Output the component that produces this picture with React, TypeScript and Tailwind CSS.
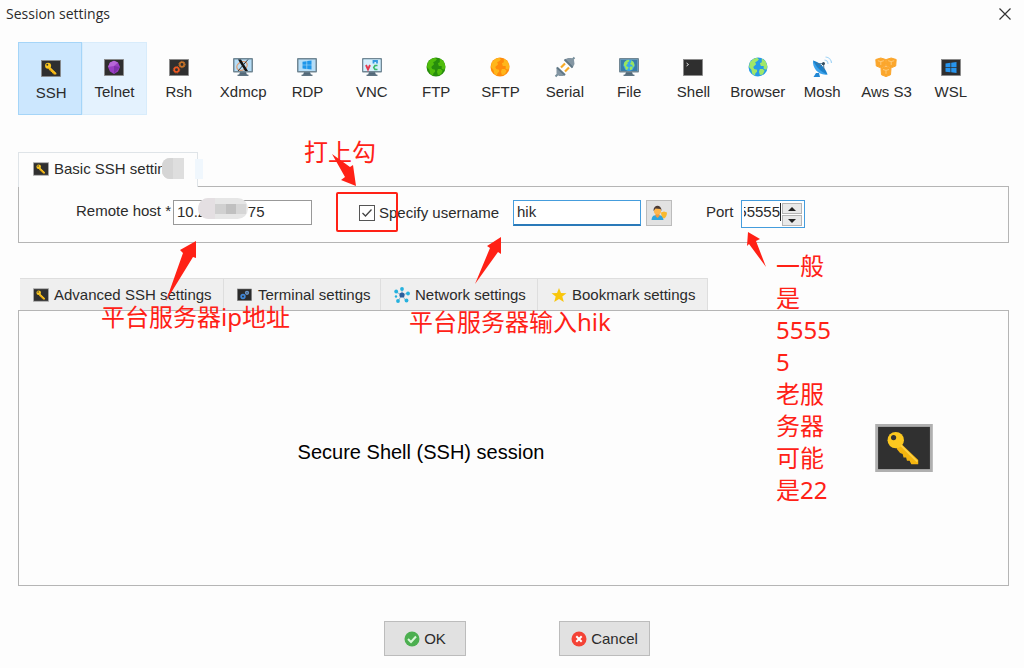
import React, { useState } from 'react';

function Key() {
  return (
    <g transform="translate(2.500 1.500) scale(.9)">
      <path d="M26 20 L47 40 L47 45 L39 45 L37 41 L34 41 L33 37 L30 37 L29 33 L26 32 L22 27 Z" fill="#f5b50f" />
      <circle cx="21" cy="17" r="9.500" fill="#fcc81f" />
      <path d="M27 23 L46 42" stroke="#fdd043" strokeWidth="2" />
      <circle cx="18.500" cy="14" r="3" fill="#333" />
    </g>
  );
}

function KeyTile({ className }: { className: string }) {
  return (
    <svg viewBox="0 0 60 50" className={className} aria-hidden="true">
      <rect x="1.500" y="1.500" width="57" height="47" fill="#303030" stroke="#b0b0b0" strokeWidth="3" />
      <Key />
    </svg>
  );
}

function Svg({ children }: { children: React.ReactNode }) {
  return <svg viewBox="0 0 22 22" className="h-[22px] w-[22px]" aria-hidden="true">{children}</svg>;
}

function Tile({ children }: { children: React.ReactNode }) {
  return (
    <Svg>
      <rect x="1.500" y="3.500" width="19" height="16" fill="#2f2f2f" stroke="#8b8b8b" strokeWidth="0.800" />
      {children}
    </Svg>
  );
}

function Monitor({ children }: { children: React.ReactNode }) {
  return (
    <Svg>
      <path d="M8 16h6l1 3h-8z" fill="#536878" />
      <rect x="5.500" y="18.500" width="11" height="1.500" rx="0.500" fill="#5f7482" />
      <rect x="1" y="2" width="20" height="14.500" rx="1" fill="#718794" />
      <rect x="2.500" y="3.500" width="17" height="11.500" fill="#b5ddf7" />
      {children}
    </Svg>
  );
}

function Globe({ sea, land, cx = 11, cy = 11, r = 9.5 }: { sea: string; land: string; cx?: number; cy?: number; r?: number }) {
  return (
    <g transform={`translate(${cx} ${cy}) scale(${r / 10})`}>
      <circle r="10" fill={sea} />
      <path d="M-8.500 -5 L-5 -8.500 L-1 -9.800 L1 -8 L-1 -6 L-3 -5 L-2 -3 L-5 0 L-4 2 L-1 3 L-1 5 L-3 7 L-3 9.300 L-6 7 L-7 3 L-9.500 0 Z" fill={land} />
      <path d="M4 -9 L8 -6 L9.800 -1 L9 3 L6 2 L6 -1 L3 -1 L2 -4 L4 -5 Z M2 2 L5 2 L7 4 L5 8 L2 8.500 L1 5 Z" fill={land} />
    </g>
  );
}

function WindowsMark({ x, y, s, fill }: { x: number; y: number; s: number; fill: string }) {
  return (
    <path
      transform={`translate(${x} ${y}) scale(${s})`}
      d="M0 1.300 L4.500 0.700 V4.700 H0Z M5.200 0.600 L10 0 V4.700 H5.200Z M0 5.400 H4.500 V9.400 L0 8.800Z M5.200 5.400 H10 V10 L5.200 9.400Z"
      fill={fill}
    />
  );
}

function Bucket({ x, y }: { x: number; y: number }) {
  return (
    <g transform={`translate(${x} ${y})`}>
      <path d="M0 1.500 L5 0 L10 1.500 L9.500 8 L5 9.800 L0.500 8Z" fill="#fba62c" stroke="#fba62c" strokeLinejoin="round" />
      <path d="M2 2.700 L5 3.600 L8 2.700 M5 3.600 V7" fill="none" stroke="#ffd38a" strokeWidth="0.800" />
    </g>
  );
}

const sessions: { name: string; icon: React.ReactNode }[] = [
  { name: 'SSH', icon: <Tile><g transform="translate(.600 2.800) scale(.35)"><Key /></g></Tile> },
  {
    name: 'Telnet',
    icon: (
      <Tile>
        <path d="M11 4.800 L15 6.500 L17 11 L15 15.500 L11 18 L7 15.500 L5 11 L7 6.500Z" fill="#9a3fc4" />
        <path d="M11 4.800 L15 6.500 L11 10 L5 11 L7 6.500Z" fill="#b766d8" />
        <path d="M11 10 L17 11 L11 18Z" fill="#8031ac" />
      </Tile>
    ),
  },
  {
    name: 'Rsh',
    icon: (
      <Tile>
        <circle cx="8.500" cy="13.800" r="3.200" fill="none" stroke="#f05a22" strokeWidth="1" strokeDasharray="1 .700" />
        <circle cx="8.500" cy="13.800" r="2.200" fill="none" stroke="#f05a22" strokeWidth="1.500" />
        <circle cx="14" cy="8.500" r="3.200" fill="none" stroke="#c87328" strokeWidth="1" strokeDasharray="1 .700" />
        <circle cx="14" cy="8.500" r="2.200" fill="none" stroke="#c87328" strokeWidth="1.500" />
      </Tile>
    ),
  },
  {
    name: 'Xdmcp',
    icon: (
      <Monitor>
        <ellipse cx="10" cy="10" rx="5.500" ry="4" transform="rotate(-30 10 10)" fill="none" stroke="#e19a6d" strokeWidth="1.300" />
        <path d="M6 3.500h3l7 11.500h-3z" fill="#111" />
        <path d="M16 3.500 L6 15" stroke="#222" strokeWidth="0.900" />
      </Monitor>
    ),
  },
  { name: 'RDP', icon: <Monitor><WindowsMark x={6.5} y={4.5} s={0.9} fill="#1e96ea" /></Monitor> },
  {
    name: 'VNC',
    icon: (
      <Monitor>
        <rect x="2.500" y="3.500" width="17" height="11.500" fill="#d5effc" />
        <path d="M5 9 L7 13.500 L9 9" fill="none" stroke="#e33b50" strokeWidth="1.900" />
        <path d="M12.500 7.500 V5 H16 V7.500" fill="none" stroke="#3398e0" strokeWidth="1.800" />
        <path d="M16.500 9.500 H14 L12.800 11.500 L14 13.500 H16.500" fill="none" stroke="#3bb969" strokeWidth="1.700" />
      </Monitor>
    ),
  },
  { name: 'FTP', icon: <Svg><Globe sea="#278d0c" land="#50bd0c" /></Svg> },
  { name: 'SFTP', icon: <Svg><Globe sea="#ff8b0b" land="#ffb61b" /></Svg> },
  {
    name: 'Serial',
    icon: (
      <Svg>
        <path d="M1.500 20.500 L4 18 M18 4 L20.500 1.500" stroke="#78909c" strokeWidth="2" />
        <path d="M2.500 11 L11.500 19 L9 20 L5 20 L2.500 17.500Z M10.500 3.500 L18.500 12 L20.500 8 L20 4 L17.500 2 L14 2Z" fill="#8496a3" />
        <path d="M7 11.500 L11 7.500 M11 15.500 L15 11.500" stroke="#f7aa26" strokeWidth="2.200" />
        <path d="M3 11.500 L11 19 M10.500 3.500 L18.500 11.500" stroke="#607785" strokeWidth="1.800" />
      </Svg>
    ),
  },
  { name: 'File', icon: <Monitor><rect x="2.500" y="3.500" width="17" height="11.500" fill="#397da8" /><Globe cx={11} cy={9.3} r={5.6} sea="#37a7ee" land="#9be65c" /></Monitor> },
  { name: 'Shell', icon: <Tile><path d="M4.500 7 L6.500 8.500 L4.500 10" fill="none" stroke="#ddd" strokeWidth="1" /></Tile> },
  { name: 'Browser', icon: <Svg><Globe sea="#259be9" land="#a0e769" /></Svg> },
  {
    name: 'Mosh',
    icon: (
      <Svg>
        <path d="M5 17 L2.500 21 H9 L8 17Z" fill="#2287d4" />
        <path d="M2 4.500 C1 12 8 20 16.500 18.500Z" fill="#3ba2eb" />
        <path d="M2 4.500 C8 6 14 11 16.500 18.500 C10 16 5 11 2 4.500Z" fill="#1b80ca" />
        <path d="M8 12 L12.500 7.500 M5 8 L12.500 7.500 L13 14" stroke="#4c7592" strokeWidth="1" fill="none" />
        <circle cx="12.500" cy="7.500" r="1.500" fill="#344b5b" />
        <path d="M13.500 4 A4 4 0 0 1 17 8 M14.500 1 A6.500 6.500 0 0 1 20.500 7" fill="none" stroke="#a5d5f6" strokeWidth="1.200" />
      </Svg>
    ),
  },
  { name: 'Aws S3', icon: <Svg><Bucket x={0.8} y={2} /><Bucket x={11.2} y={2} /><Bucket x={6} y={10.8} /></Svg> },
  { name: 'WSL', icon: <Tile><WindowsMark x={5.5} y={6} s={1.1} fill="#2795ee" /></Tile> },
];

function TerminalIcon() {
  return (
    <svg viewBox="0 0 16 14" className="h-[14px] w-4" aria-hidden="true">
      <rect x="0.500" y="1" width="14" height="11.500" fill="#2b2b2b" stroke="#777" strokeWidth="0.600" />
      <circle cx="6" cy="8.500" r="1.800" fill="none" stroke="#3f86d6" strokeWidth="1.800" />
      <circle cx="10" cy="4.800" r="1.400" fill="none" stroke="#6a97cb" strokeWidth="1.500" />
    </svg>
  );
}

function NetworkIcon() {
  return (
    <svg viewBox="0 0 16 16" className="h-4 w-4" aria-hidden="true">
      <path d="M8 8 V2 M8 8 L14 6 M8 8 L12 14 M8 8 L4 14 M8 8 L2 5" stroke="#8fb4cd" strokeWidth="1" />
      <circle cx="8" cy="8" r="2.600" fill="#2a5d9c" />
      <g fill="#25b1de">
        <circle cx="8" cy="2" r="1.900" /><circle cx="14" cy="6.500" r="1.900" /><circle cx="12.500" cy="13.500" r="1.900" />
        <circle cx="4" cy="14" r="1.900" /><circle cx="2.200" cy="4.500" r="1.900" /><circle cx="2" cy="9.500" r="1.200" />
      </g>
    </svg>
  );
}

function StarIcon() {
  return (
    <svg viewBox="0 0 16 16" className="h-4 w-4" aria-hidden="true">
      <path d="M8 1 L10 6 L15.500 6.200 L11.300 9.600 L12.800 15 L8 12 L3.200 15 L4.700 9.600 L0.500 6.200 L6 6Z" fill="#f9c60c" />
    </svg>
  );
}

const lowerTabs = [
  { name: 'Advanced SSH settings', icon: <KeyTile className="h-[14px] w-4" />, width: 'w-[204px] pl-[13px]' },
  { name: 'Terminal settings', icon: <TerminalIcon />, width: 'w-[157px] pl-[13px]' },
  { name: 'Network settings', icon: <NetworkIcon />, width: 'w-[157px] pl-[13px]' },
  { name: 'Bookmark settings', icon: <StarIcon />, width: 'w-[170px] pl-[13px]' },
];

function Arrow({ className, points, box }: { className: string; points: string; box: string }) {
  return (
    <svg viewBox={box} className={`pointer-events-none absolute ${className}`} aria-hidden="true">
      <polygon points={points} fill="#ff2116" />
    </svg>
  );
}

function Note({ className, children }: { className: string; children: React.ReactNode }) {
  return (
    <p className={`pointer-events-none absolute font-['Noto_Sans','Noto_Sans_CJK_SC',sans-serif] text-[24px] leading-8 whitespace-nowrap text-[#ff2116] ${className}`}>
      {children}
    </p>
  );
}

export default function App() {
  const [session, setSession] = useState('SSH');
  const [host, setHost] = useState('10.2' + ' '.repeat(10) + '75');
  const [useName, setUseName] = useState(true);
  const [user, setUser] = useState('hik');
  const [port, setPort] = useState(55555);

  return (
    <div className="relative min-h-screen bg-[#fdfdfd] font-['Liberation_Sans',Arial,sans-serif] text-[15px] leading-5 text-[#2b2b2b]">
      <header className="flex h-[42px] items-start justify-between pt-1 pr-3 pl-[6px]">
        <h1 className="font-['Open_Sans',sans-serif] text-[14px] leading-5">Session settings</h1>
        <button type="button" aria-label="Close" className="flex h-5 w-[14px] items-center justify-center">
          <svg viewBox="0 0 12 12" className="h-3 w-3" aria-hidden="true">
            <path d="M0.500 0.500 L11.500 11.500 M11.500 0.500 L0.500 11.500" stroke="#333" strokeWidth="1.200" />
          </svg>
        </button>
      </header>

      <nav className="grid h-[73px] grid-cols-[repeat(15,minmax(0,1fr))] pr-[41px] pl-[18px]">
        {sessions.map((s) => (
          <button
            key={s.name}
            type="button"
            onClick={() => setSession(s.name)}
            className={`flex flex-col items-center border whitespace-nowrap ${
              session === s.name
                ? 'border-[#a5d5f8] bg-[#cce7fe] pt-[14px] pl-[2px]'
                : s.name === 'Telnet'
                  ? 'border-[#d8ecfb] bg-[#e4f2fe] pt-[13px]'
                  : 'border-transparent pt-[13px]'
            }`}
          >
            {s.icon}
            <span className="mt-1">{s.name}</span>
          </button>
        ))}
      </nav>

      <main className="pr-[15px] pl-[18px]">
        <section className="mt-[37px]">
          <div className="relative z-10 -mb-px flex h-[35px] w-[180px] items-center border border-b-0 border-[#dfe4e8] bg-[#fdfdfd] pb-[2px] pl-[14px]">
            <KeyTile className="h-[14px] w-4" />
            <h2 className="ml-[5px] whitespace-nowrap">Basic SSH settings</h2>
            <span className="absolute top-[5px] right-[13px] flex h-[21px] w-[22px] overflow-hidden rounded-l-lg bg-[#dedede]">
              <span className="h-full w-[11px] bg-[#d5d5d5]" />
            </span>
            <span className="absolute top-[6px] -right-[6px] h-5 w-2 bg-[#f0f7fd]" />
          </div>

          <form className="flex h-[57px] items-start border border-[#b5b5b5] pt-[13px] pl-[57px]">
            <label htmlFor="host" className="mt-px w-[97px] whitespace-nowrap">Remote host *</label>
            <div className="relative">
              <input
                id="host"
                value={host}
                onChange={(e) => setHost(e.target.value)}
                className="block h-[25px] w-[139px] border border-[#999] bg-white px-[3px] pb-[2px] outline-none"
              />
              <span className="absolute -top-[2px] left-[25px] flex h-[21px] w-[50px] overflow-hidden rounded-full bg-[#e6e6e6]">
                <span className="h-full w-[17px] bg-[#e4dfe2]" />
                <span className="mt-[6px] h-[10px] w-[11px] bg-[#d0d0d0]" />
                <span className="mt-[6px] h-[10px] w-[10px] bg-[#c0c0c0]" />
                <span className="mt-[6px] h-[10px] w-[10px] bg-[#d6d6d6]" />
              </span>
            </div>

            <label className="mt-[3px] ml-[47px] flex w-[154px] items-center gap-1 whitespace-nowrap">
              <span className="relative flex h-4 w-4">
                <input
                  type="checkbox"
                  checked={useName}
                  onChange={(e) => setUseName(e.target.checked)}
                  className="h-4 w-4 appearance-none border border-[#555] bg-white"
                />
                {useName && (
                  <svg viewBox="0 0 16 16" className="pointer-events-none absolute inset-0 h-4 w-4" aria-hidden="true">
                    <path d="M3.500 8 L6.500 11 L12.500 4.500" fill="none" stroke="#444" strokeWidth="1.300" />
                  </svg>
                )}
              </span>
              Specify username
            </label>
            <input
              aria-label="Username"
              value={user}
              onChange={(e) => setUser(e.target.value)}
              className="h-[26px] w-[128px] border border-b-2 border-[#459ddd] border-b-[#2a7ab9] bg-white px-[3px] pb-[3px] outline-none"
            />
            <button type="button" aria-label="Choose user" className="ml-[5px] flex h-[26px] w-[26px] items-center justify-center border border-[#bcbcbc] bg-[#e2e2e2]">
              <svg viewBox="0 0 16 16" className="h-4 w-4" aria-hidden="true">
                <path d="M0.500 15 C1 10.500 3 10 6.500 10 C10 10 12 10.500 12.500 15Z" fill="#31a5dd" />
                <path d="M4.500 9 H8.500 V11 L6.500 13 L4.500 11Z" fill="#f39b3a" />
                <circle cx="6.500" cy="6" r="3.600" fill="#ffb74d" />
                <path d="M2.500 6 C2 -1 11 -1 10.500 6 L9.500 4 L4.500 3.500Z" fill="#4b3b37" />
                <path d="M10 7.500 L13 6.500 L16 7.500 C16 11 14.500 12.500 13 13.500 C11.500 12.500 10 11 10 7.500Z" fill="#f9b92f" />
              </svg>
            </button>

            <label htmlFor="port" className="mt-[2px] ml-[34px] w-[35px]">Port</label>
            <div className="flex h-[28px] w-[64px] border border-[#459ddd] bg-white pr-[2px] pl-[2px]">
              <div className="mt-[2px] flex h-[18px] w-[38px] justify-end overflow-hidden border-r border-[#222]">
                <input
                  id="port"
                  value={port}
                  onChange={(e) => setPort(Number(e.target.value) || 0)}
                  className="h-[17px] w-[42px] shrink-0 bg-transparent outline-none"
                />
              </div>
              <div className="mt-[2px] ml-px flex w-[20px] flex-col gap-px">
                <button type="button" aria-label="Increase port" onClick={() => setPort(port + 1)} className="flex h-[11px] items-center justify-center border border-[#b5b5b5] bg-[#e9e9e9]">
                  <svg viewBox="0 0 8 4" className="h-1 w-2" aria-hidden="true"><path d="M0 4 L4 0 L8 4Z" fill="#222" /></svg>
                </button>
                <button type="button" aria-label="Decrease port" onClick={() => setPort(port - 1)} className="flex h-[11px] items-center justify-center border border-[#b5b5b5] bg-[#e9e9e9]">
                  <svg viewBox="0 0 8 4" className="h-1 w-2" aria-hidden="true"><path d="M0 0 L4 4 L8 0Z" fill="#222" /></svg>
                </button>
              </div>
            </div>
          </form>
        </section>

        <section className="mt-[35px]">
          <div className="flex h-8 pl-[2px]">
            {lowerTabs.map((t) => (
              <button
                key={t.name}
                type="button"
                className={`flex items-center gap-[5px] border-t border-r border-[#dedede] bg-[#efefef] whitespace-nowrap ${t.width}`}
              >
                {t.icon}
                {t.name}
              </button>
            ))}
          </div>
          <div className="flex h-[276px] items-center border border-[#b5b5b5] pr-[75px]">
            <p className="flex-1 pt-2 text-center text-[20px] leading-6 text-black">Secure Shell (SSH) session</p>
            <KeyTile className="ml-[52px] h-[48px] w-[58px]" />
          </div>
        </section>
      </main>

      <footer className="flex justify-center gap-[93px] pt-[35px] pb-3 pl-[10px]">
        <button type="button" className="flex h-[35px] w-[82px] items-center justify-center gap-1 border border-[#bcbcbc] bg-[#e1e1e1]">
          <svg viewBox="0 0 16 16" className="h-4 w-4" aria-hidden="true">
            <circle cx="8" cy="8" r="7.500" fill="#4caf50" />
            <path d="M4 8 L7 11 L12 5.500" fill="none" stroke="#d9f7d8" strokeWidth="2" />
          </svg>
          OK
        </button>
        <button type="button" className="flex h-[35px] w-[91px] items-center justify-center gap-1 border border-[#bcbcbc] bg-[#e1e1e1]">
          <svg viewBox="0 0 16 16" className="h-4 w-4" aria-hidden="true">
            <circle cx="8" cy="8" r="7.500" fill="#f44336" />
            <path d="M5.300 5.300 L10.700 10.700 M10.700 5.300 L5.300 10.700" stroke="#fff" strokeWidth="2" />
          </svg>
          Cancel
        </button>
      </footer>

      <Note className="top-[136px] left-[304px]">打上勾</Note>
      <Note className="top-[301px] left-[101px]">平台服务器ip地址</Note>
      <Note className="top-[306px] left-[409px]">平台服务器输入hik</Note>
      <Note className="top-[250px] left-[776px]">
        一般<br />是<br />5555<br />5<br />老服<br />务器<br />可能<br />是22
      </Note>
      <span className="pointer-events-none absolute top-[192px] left-[336px] z-10 h-[40px] w-[62px] rounded-[2px] border-2 border-[#ff2116]" />
      <Arrow className="top-[153px] left-[331px] z-10 h-[34px] w-[26px]" box="0 0 26 34" points="1,1 19,14 22,12 25,33 10,27 14,24" />
      <Arrow className="top-[240px] left-[165px] z-10 h-[62px] w-[32px]" box="0 0 32 62" points="1,61 18,13 15,10 31,1 31,18 28,17" />
      <Arrow className="top-[236px] left-[474px] z-10 h-[49px] w-[28px]" box="0 0 28 49" points="1,48 16,12 13,10 27,1 27,18 24,16" />
      <Arrow className="top-[231px] left-[746px] z-10 h-[37px] w-[22px]" box="0 0 22 37" points="2,1 14,8 10,10 20,36 3,13 1,15" />
    </div>
  );
}
